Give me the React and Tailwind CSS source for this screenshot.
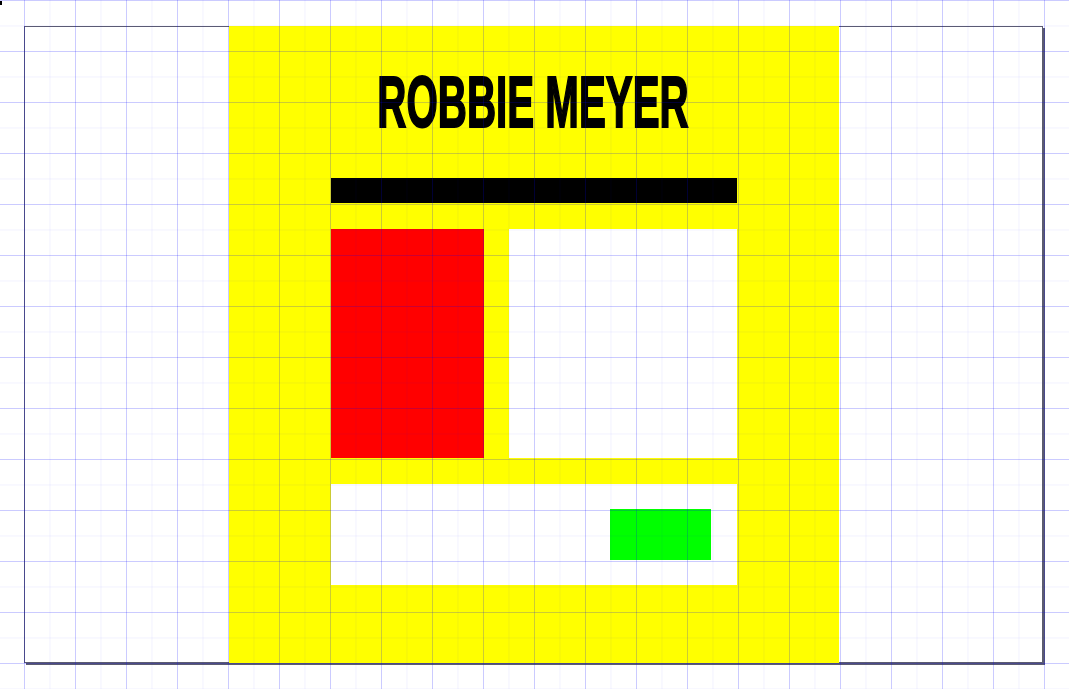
import React from 'react'

const gridLines =
  'bg-[linear-gradient(to_right,rgba(0,0,255,0.16)_1px,transparent_1px),linear-gradient(to_bottom,rgba(0,0,255,0.16)_1px,transparent_1px),linear-gradient(to_right,rgba(0,0,255,0.05)_1px,transparent_1px),linear-gradient(to_bottom,rgba(0,0,255,0.05)_1px,transparent_1px)]'

const App = () => {
  return (
    <div className="relative w-[1069px] h-[689px] bg-white overflow-hidden">
      {/* stray marker in the corner */}
      <div className="w-[2px] h-[4px] bg-black mt-px" />

      <div className="pl-[24px] pt-[21px]">
        <div className="relative w-[1019px] h-[637px] border border-[#5c5c70] shadow-[2px_2px_0_#5c5c70] flex justify-center">
          {/* card */}
          <div className="w-[610px] -my-px bg-[#ffff00] px-[102px] pt-[40px] flex flex-col">
            <h1 className="h-[112px] flex justify-center text-[72px] leading-[72px] font-bold text-black uppercase whitespace-nowrap font-['Liberation_Sans',sans-serif]">
              <span className="shrink-0 scale-x-[0.56] [-webkit-text-stroke:2px_black]">Robbie Meyer</span>
            </h1>
            <div className="h-[25px] bg-black" />
            <div className="mt-[26px] flex gap-[25px] h-[229px]">
              <div className="w-[153px] bg-[#ff0000]" />
              <div className="flex-1 bg-white" />
            </div>
            <div className="mt-[26px] h-[101px] bg-white flex items-center justify-end pr-[26px]">
              <div className="w-[101px] h-[51px] bg-[#00ff00]" />
            </div>
          </div>
        </div>
      </div>

      {/* graph paper overlay */}
      <div
        className={`absolute inset-0 pointer-events-none ${gridLines} bg-size-[51px_51px,51px_51px,25.5px_25.5px,25.5px_25.5px] bg-position-[24px_0,24px_0,24px_0,24px_0]`}
      />
    </div>
  )
}

export default App
